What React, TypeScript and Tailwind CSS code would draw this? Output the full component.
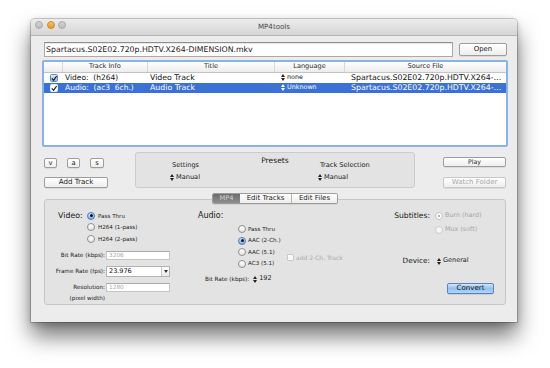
import type { ReactNode } from 'react';

function Stepper({ className = '' }: { className?: string }) {
  return (
    <svg width="4" height="7" viewBox="0 0 4 7" className={`shrink-0 ${className}`}>
      <path d="M0 3 L2 0 L4 3 Z M0 4 L2 7 L4 4 Z" fill="#222" />
    </svg>
  );
}

function Button({ children, className = '', disabled = false }: { children: ReactNode; className?: string; disabled?: boolean }) {
  return (
    <div
      className={`flex items-center justify-center rounded-[2px] border bg-linear-to-b from-white to-[#eeeeee] shadow-[0_0.5px_0.5px_rgba(0,0,0,0.15)] ${
        disabled ? 'border-[#c8c8c8] text-[#a8a8a8]' : 'border-[#9d9d9d] text-[#1b1b1b]'
      } ${className}`}
    >
      {children}
    </div>
  );
}

function Radio({ checked = false, disabled = false }: { checked?: boolean; disabled?: boolean }) {
  const base = 'w-[8px] h-[8px] rounded-full border flex items-center justify-center shrink-0';
  if (checked && !disabled)
    return (
      <span className={`${base} border-[#5079b3] bg-linear-to-b from-[#d6e7fa] to-[#78ade9]`}>
        <span className="w-[3px] h-[3px] rounded-full bg-[#151515]" />
      </span>
    );
  if (checked)
    return (
      <span className={`${base} border-[#c4c4c4] bg-[#f9f9f9]`}>
        <span className="w-[2.5px] h-[2.5px] rounded-full bg-[#9c9c9c]" />
      </span>
    );
  return (
    <span
      className={`${base} ${
        disabled ? 'border-[#cbcbcb] bg-[#f6f6f6]' : 'border-[#8e8e8e] bg-linear-to-b from-white to-[#e4e4e4]'
      }`}
    />
  );
}

function Check({ light = false }: { light?: boolean }) {
  return (
    <span
      className={`w-[8px] h-[8px] rounded-[1.5px] border flex items-center justify-center ${
        light ? 'border-[#e6eefa] bg-white' : 'border-[#6289c2] bg-linear-to-b from-[#dcebfb] to-[#8ab7ea]'
      }`}
    >
      <svg width="7" height="7" viewBox="0 0 7 7">
        <path d="M1 3.3 L3 5.6 L6.6 0.6" stroke="#1b1b1b" strokeWidth="1.4" fill="none" />
      </svg>
    </span>
  );
}

function Field({ children, className = '' }: { children: ReactNode; className?: string }) {
  return (
    <div
      className={`flex items-center bg-white border border-[#c4c4c4] border-t-[#a9a9a9] pl-[2px] text-[5.8px] text-[#ababab] ${className}`}
    >
      {children}
    </div>
  );
}

const cols = [
  { w: 'w-[19px]', label: '' },
  { w: 'w-[85px]', label: 'Track Info' },
  { w: 'w-[127px]', label: 'Title' },
  { w: 'w-[70px]', label: 'Language' },
  { w: 'w-[161px]', label: 'Source File' },
];

const tracks = [
  { info: 'Video:  (h264)', title: 'Video Track', lang: 'none', selected: false },
  { info: 'Audio:  (ac3  6ch.)', title: 'Audio Track', lang: 'Unknown', selected: true },
];

export default function App() {
  return (
    <div className="w-[550px] h-[368px] bg-white pt-[19px] pl-[31px] overflow-hidden font-['DejaVu_Sans',sans-serif] text-[#1a1a1a]">
      <div className="w-[486px] h-[303px] bg-[#ececec] rounded-t-[4px] shadow-[0_14px_22px_rgba(0,0,0,0.55),0_2px_6px_rgba(0,0,0,0.2),0_0_0_1px_rgba(0,0,0,0.18)] flex flex-col">
        {/* title bar */}
        <div className="h-[17px] shrink-0 rounded-t-[4px] bg-linear-to-b from-[#ececec] to-[#d5d5d5] border-b border-[#b4b4b4] grid grid-cols-[1fr_auto_1fr] items-start">
          <div className="flex gap-[3.5px] pl-[4px] pt-[2px]">
            <span className="w-[8px] h-[8px] rounded-full border border-[#a9a9a9] bg-linear-to-b from-[#d4d4d4] to-[#bcbcbc]" />
            <span className="w-[8px] h-[8px] rounded-full border border-[#c98a2a] bg-linear-to-b from-[#f7c65d] to-[#e19b2a]" />
            <span className="w-[8px] h-[8px] rounded-full border border-[#a9a9a9] bg-linear-to-b from-[#d4d4d4] to-[#bcbcbc]" />
          </div>
          <span className="text-[7.1px] leading-[15px] text-[#4a4a4a]">MP4tools</span>
          <span />
        </div>

        {/* file row */}
        <div className="flex items-center gap-[6px] pl-[13px] pr-[10px] mt-[6px]">
          <div className="flex-1 h-[15px] bg-white border border-[#aaaaaa] border-t-[#8f8f8f] shadow-[inset_0_1px_1px_rgba(0,0,0,0.1)] pl-[1px] text-[7.8px] leading-[13px]">
            Spartacus.S02E02.720p.HDTV.X264-DIMENSION.mkv
          </div>
          <Button className="w-[48px] h-[13px] text-[6.9px]">Open</Button>
        </div>

        {/* track table */}
        <div className="mt-[3px] ml-[11px] w-[466px] h-[87px] shrink-0 rounded-[2px] border-2 border-[#8bb2e5] bg-white overflow-hidden">
          <div className="h-[11px] flex border-b border-[#c3c3c3] bg-linear-to-b from-white to-[#ececec]">
            {cols.map((c, i) => (
              <div
                key={i}
                className={`${c.w} flex items-center justify-center text-[6.6px] text-[#2a2a2a] ${i < cols.length - 1 ? 'border-r border-[#d8d8d8]' : ''}`}
              >
                {c.label}
              </div>
            ))}
          </div>
          {tracks.map((t) => (
            <div
              key={t.title}
              className={`h-[10px] flex items-center whitespace-pre ${t.selected ? 'bg-[#3b71d4] text-white' : 'text-[#111]'}`}
            >
              <div className="w-[19px] flex justify-center">
                <Check light={t.selected} />
              </div>
              <div className="w-[85px] pl-[2px] text-[7.5px]">{t.info}</div>
              <div className="w-[127px] pl-[2px] text-[7.8px]">{t.title}</div>
              <div className="w-[70px] pl-[6px] flex items-center gap-[2px] text-[6.4px]">
                <svg width="4" height="7" viewBox="0 0 4 7" className="shrink-0">
                  <path d="M0 3 L2 0 L4 3 Z M0 4 L2 7 L4 4 Z" fill={t.selected ? '#fff' : '#222'} />
                </svg>
                {t.lang}
              </div>
              <div className="w-[161px] pl-[6px] text-[7.8px]">Spartacus.S02E02.720p.HDTV.X264-…</div>
            </div>
          ))}
        </div>

        {/* controls row */}
        <div className="flex items-start pl-[13px] mt-[5px] h-[36px] shrink-0">
          <div className="w-[64px] flex flex-col pt-[6px]">
            <div className="flex gap-[10px]">
              <Button className="w-[13px] h-[10px] text-[6.8px]">v</Button>
              <Button className="w-[13px] h-[10px] text-[6.8px]">a</Button>
              <Button className="w-[14px] h-[10px] text-[6.8px]">s</Button>
            </div>
            <Button className="mt-[9px] w-[64px] h-[11px] text-[7.1px]">Add Track</Button>
          </div>

          <div className="ml-[27px] w-[280px] h-[36px] rounded-[3px] border border-[#cbcbcb] bg-[#e3e3e3] flex flex-col">
            <div className="pt-[3px] text-center text-[7.6px] leading-[9px]">Presets</div>
            <div className="-mt-[4px] flex pl-[34px] text-[6.6px] leading-[9px]">
              <div className="w-[148px] flex flex-col gap-[3px]">
                <span className="pl-[2px]">Settings</span>
                <span className="flex items-center gap-[2px]">
                  <Stepper />
                  Manual
                </span>
              </div>
              <div className="flex flex-col gap-[3px]">
                <span className="pl-[2px]">Track Selection</span>
                <span className="flex items-center gap-[2px]">
                  <Stepper />
                  Manual
                </span>
              </div>
            </div>
          </div>

          <div className="ml-[28px] w-[63px] flex flex-col pt-[5px]">
            <Button className="h-[10px] text-[6.2px]">Play</Button>
            <Button disabled className="mt-[10px] h-[11px] text-[7px]">
              Watch Folder
            </Button>
          </div>
        </div>

        {/* tabs */}
        <div className="mt-[5px] pl-[13px] pr-[11px]">
          <div className="relative z-10 flex justify-center h-[11px]">
            <div className="flex rounded-[2px] border border-[#9c9c9c] overflow-hidden text-[7px] leading-[9px] shadow-[0_0.5px_0.5px_rgba(0,0,0,0.15)]">
              <div className="w-[27px] text-center bg-linear-to-b from-[#6c6c6c] to-[#8e8e8e] text-[#d4d4d4] text-[6.7px]">MP4</div>
              <div className="w-[52px] text-center bg-linear-to-b from-white to-[#ededed] border-r border-[#b5b5b5]">Edit Tracks</div>
              <div className="w-[45px] text-center bg-linear-to-b from-white to-[#ededed]">Edit Files</div>
            </div>
          </div>

          <div className="-mt-[5px] h-[106px] rounded-[3px] border border-[#c6c6c6] bg-[#e3e3e3] flex">
            {/* video */}
            <div className="w-[153px] shrink-0 pl-[13px] pt-[10px]">
              <div className="flex">
                <span className="w-[29px] text-[7.9px] leading-[11.5px]">Video:</span>
                <div className="flex flex-col">
                  {['Pass Thru', 'H264 (1-pass)', 'H264 (2-pass)'].map((l, i) => (
                    <div key={l} className="h-[11.5px] flex items-center gap-[3px] text-[5.6px]">
                      <Radio checked={i === 0} />
                      {l}
                    </div>
                  ))}
                </div>
              </div>
              <div className="-ml-[13px] mt-[6.5px] flex flex-col text-[5.7px]">
                <div className="flex items-center h-[9px]">
                  <span className="w-[60px] text-right">Bit Rate (kbps):</span>
                  <Field className="ml-[1px] w-[64px] h-[9px]">3206</Field>
                </div>
                <div className="flex items-center h-[11px] mt-[6px]">
                  <span className="w-[60px] text-right">Frame Rate (fps):</span>
                  <div className="ml-[1px] w-[64px] h-[11px] flex bg-white border border-[#b3b3b3]">
                    <span className="flex-1 pl-[2px] text-[6.5px] leading-[9px] text-[#111]">23.976</span>
                    <span className="w-[8px] border-l border-[#c4c4c4] bg-linear-to-b from-white to-[#eaeaea] flex items-center justify-center">
                      <svg width="4" height="3" viewBox="0 0 4 3">
                        <path d="M0 0 L4 0 L2 3 Z" fill="#333" />
                      </svg>
                    </span>
                  </div>
                </div>
                <div className="flex items-center h-[9px] mt-[6px]">
                  <span className="w-[60px] text-right">Resolution:</span>
                  <Field className="ml-[1px] w-[64px] h-[9px]">1280</Field>
                </div>
                <div className="mt-[2px] w-[60px] h-[8px] leading-[8px] text-right">(pixel width)</div>
              </div>
            </div>

            {/* audio */}
            <div className="w-[190px] shrink-0 pt-[10px]">
              <div className="text-[8px] leading-[11.5px]">Audio:</div>
              <div className="mt-[1.75px] ml-[40px] flex">
                <div className="w-[49px] flex flex-col">
                  {['Pass Thru', 'AAC (2-Ch.)', 'AAC (5.1)', 'AC3 (5.1)'].map((l, i) => (
                    <div key={l} className="h-[11.5px] flex items-center gap-[2px] text-[5.6px]">
                      <Radio checked={i === 1} />
                      {l}
                    </div>
                  ))}
                </div>
                <div className="mt-[30.75px] h-[7px] flex items-center gap-[2px] text-[6px] text-[#a9a9a9]">
                  <span className="w-[7px] h-[7px] rounded-[1px] border border-[#c9c9c9] bg-[#f8f8f8]" />
                  add 2-Ch. Track
                </div>
              </div>
              <div className="mt-[5.25px] ml-[7px] h-[9px] flex items-center text-[5.7px]">
                Bit Rate (kbps):
                <Stepper className="ml-[4px]" />
                <span className="ml-[2px] text-[6.5px]">192</span>
              </div>
            </div>

            {/* subtitles */}
            <div className="flex-1 pt-[10px] flex flex-col">
              <div className="flex">
                <span className="w-[42px] text-right text-[7.6px] leading-[12px]">Subtitles:</span>
                <div className="ml-[5px] flex flex-col gap-[2px] text-[6.4px] text-[#a6a6a6]">
                  <div className="h-[12px] flex items-center gap-[2px]">
                    <Radio checked disabled />
                    Burn (hard)
                  </div>
                  <div className="h-[12px] flex items-center gap-[2px]">
                    <Radio disabled />
                    Mux (soft)
                  </div>
                </div>
              </div>
              <div className="mt-[20px] h-[10px] flex items-center">
                <span className="w-[42px] text-right text-[7.3px]">Device:</span>
                <Stepper className="ml-[7px]" />
                <span className="ml-[2px] text-[6.5px]">General</span>
              </div>
              <div className="mt-[17px] flex justify-end pr-[11px]">
                <div className="w-[47px] h-[11px] rounded-[2px] border border-[#5c83bb] bg-linear-to-b from-[#d3e6fb] via-[#93c0f0] to-[#b3d6f7] flex items-center justify-center text-[7.1px] text-[#111] shadow-[0_0.5px_0.5px_rgba(0,0,0,0.2)]">
                  Convert
                </div>
              </div>
            </div>
          </div>
        </div>
      </div>
    </div>
  );
}
